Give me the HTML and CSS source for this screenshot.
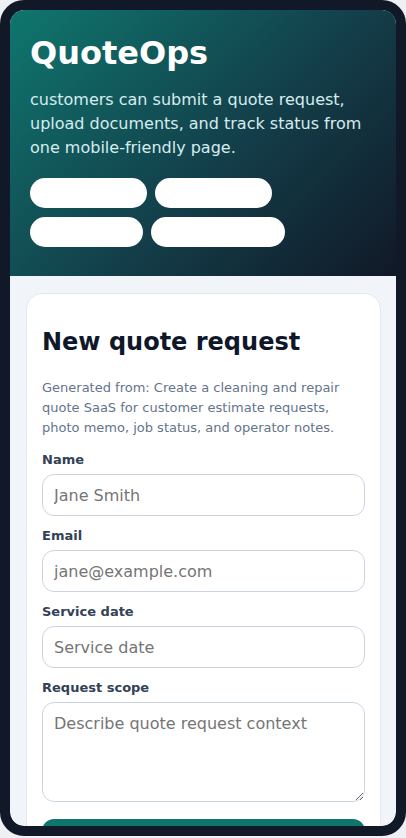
FILE: index.html
```html
<!doctype html>
<html lang="en">
<head>
<meta charset="UTF-8">
<meta name="viewport" content="width=device-width, initial-scale=1">
<title>QuoteOps</title>
<link rel="stylesheet" href="styles.css">
</head>

<body>
<div class="phone">
<div class="screen">
<header class="hero">
<h1>QuoteOps</h1>
<p>customers can submit a quote request, upload documents, and track status from one mobile-friendly page.</p>
<div class="pillRow">
<span class="pill pillWide1"></span>
<span class="pill pillWide2"></span>
<span class="pill pillWide3"></span>
<span class="pill pillWide4"></span>
</div>
</header>
<main class="main">
<form class="card">
<h2>New quote request</h2>
<p class="cardNote">Generated from: Create a cleaning and repair quote SaaS for customer estimate requests, photo memo, job status, and operator notes.</p>
<div class="field">
<label for="inputName1">Name</label>
<input id="inputName1" type="text" placeholder="Jane Smith">
</div>
<div class="field">
<label for="inputEmail1">Email</label>
<input id="inputEmail1" type="email" placeholder="jane@example.com">
</div>
<div class="field">
<label for="inputDate1">Service date</label>
<input id="inputDate1" type="text" placeholder="Service date">
</div>
<div class="field">
<label for="inputScope1">Request scope</label>
<textarea id="inputScope1" placeholder="Describe quote request context"></textarea>
</div>
<button class="submit" type="button">Submit request</button>
</form>
</main>
</div>
</div>
</body>
</html>
```

FILE: styles.css
```css
*,
*:after,
*:before {
    box-sizing: border-box;
}
body {
    background: #eef0f3;
    font-family: "DejaVu Sans", Verdana, sans-serif;
    margin: 0;
}
.phone {
    background: #111827;
    border: 10px solid #111827;
    border-radius: 24px;
    height: 836px;
    overflow: hidden;
    width: 406px;
}
.screen {
    background: #f1f5f9;
    border-radius: 14px;
    height: 100%;
    overflow: hidden;
}
.hero {
    background: linear-gradient(135deg, #0f766e 0%, #133f4a 55%, #111827 100%);
    color: #fff;
    padding: 24px 20px 29px;
}
.hero h1 {
    font-size: 32px;
    line-height: 1.2;
    margin: 0 0 16px;
}
.hero p {
    color: #d6ecef;
    font-size: 16px;
    line-height: 24px;
    margin: 0 0 18px;
}
.pillRow {
    display: flex;
    flex-wrap: wrap;
    gap: 9px 8px;
}
.pill {
    background: #fff;
    border-radius: 15px;
    display: block;
    height: 30px;
}
.pillWide1,
.pillWide2 {
    width: 117px;
}
.pillWide3 {
    width: 113px;
}
.pillWide4 {
    width: 134px;
}
.main {
    padding: 17px 15px 16px 16px;
}
.card {
    background: #fff;
    border: 1px solid #e2e8f0;
    border-radius: 16px;
    padding: 16px 15px;
}
.card h2 {
    color: #0f172a;
    font-size: 24px;
    line-height: 1.2;
    margin: 18px 0 21px;
}
.cardNote {
    color: #64748b;
    font-size: 13px;
    line-height: 20px;
    margin: 0 0 14px;
}
.field {
    margin-bottom: 12px;
}
.field label {
    color: #334155;
    display: block;
    font-size: 13px;
    font-weight: bold;
    line-height: 16px;
    margin-bottom: 6px;
}
.field input,
.field textarea {
    background: #fff;
    border: 1px solid #cbd5e1;
    border-radius: 12px;
    color: #0f172a;
    display: block;
    font-family: "DejaVu Sans", Verdana, sans-serif;
    font-size: 16px;
    width: 100%;
}
.field input {
    height: 42px;
    padding: 0 11px;
}
.field textarea {
    height: 100px;
    padding: 11px;
}
.field input::placeholder,
.field textarea::placeholder {
    color: #757575;
}
.field:last-of-type {
    margin-bottom: 17px;
}
.submit {
    background: #0f766e;
    border: 0;
    border-radius: 12px;
    color: #fff;
    display: block;
    font-family: "DejaVu Sans", Verdana, sans-serif;
    font-size: 16px;
    font-weight: bold;
    height: 44px;
    width: 100%;
}
```
